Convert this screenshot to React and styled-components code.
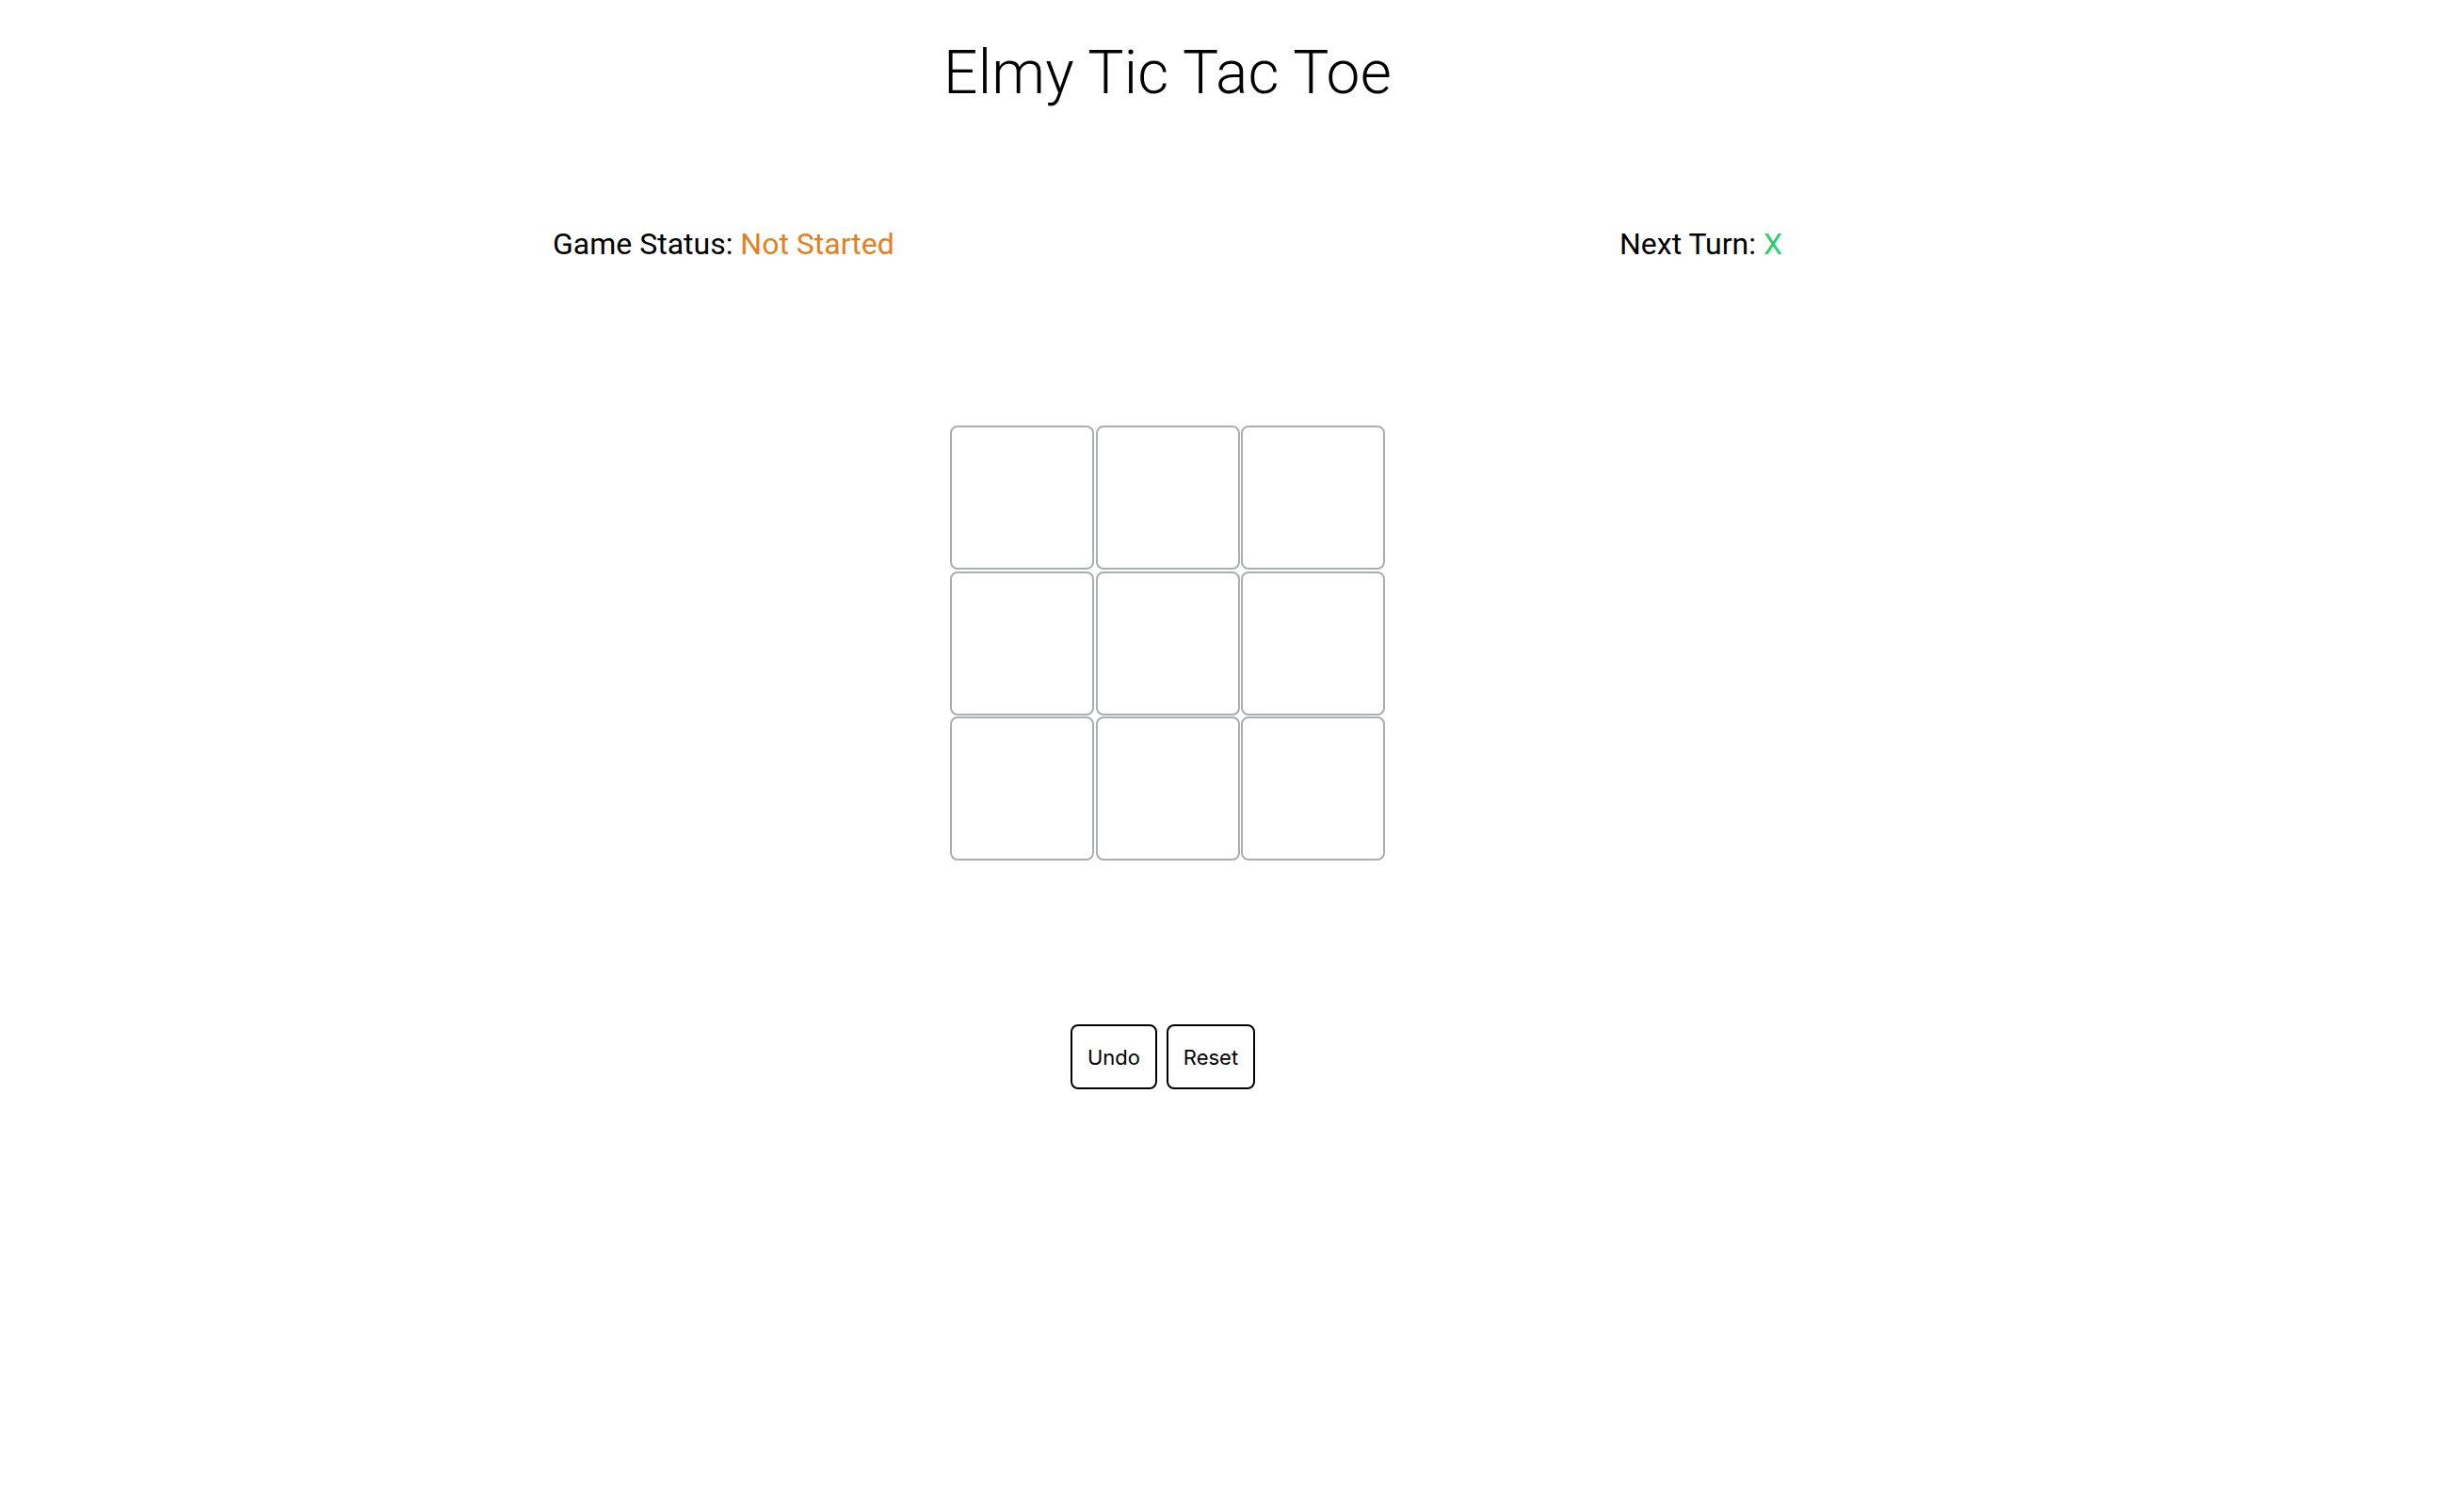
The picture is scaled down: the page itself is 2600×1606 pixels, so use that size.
import React, { useState } from 'react';
import styled, { createGlobalStyle } from 'styled-components';

const GlobalStyle = createGlobalStyle`
    html, body {
        margin: 0;
        padding: 0;
        background: #fff;
    }
    body {
        font-family: Roboto, 'Liberation Sans', sans-serif;
        color: #000;
    }
`;

const Page = styled.div`
    width: 2480px;
    display: flex;
    flex-direction: column;
    align-items: center;
`;

const Title = styled.h1`
    margin: 39px 0 0;
    font-size: 64px;
    line-height: 77px;
    font-weight: 300;
    letter-spacing: 0.2px;
`;

const StatusRow = styled.div`
    width: 1306px;
    margin-top: 123px;
    display: flex;
    justify-content: space-between;
    font-size: 32px;
    line-height: 40px;
`;

const Value = styled.span`
    color: ${props => props.color};
`;

const Board = styled.div`
    margin-top: 173px;
    display: grid;
    grid-template-columns: repeat(3, 153px);
    grid-auto-rows: 153px;
    gap: 1.5px;
`;

const Cell = styled.button`
    box-sizing: border-box;
    margin: 0;
    padding: 0;
    background: #fff;
    border: 2px solid #aaaeb2;
    border-radius: 8px;
    font-family: Roboto, sans-serif;
    font-size: 80px;
    cursor: pointer;
`;

const Actions = styled.div`
    margin: 174px 10px 0 0;
    display: flex;
    gap: 10px;
`;

const Button = styled.button`
    box-sizing: border-box;
    height: 69px;
    min-width: ${props => props.wide ? '94px' : '92px'};
    padding: 0 14px;
    background: #fff;
    border: 2px solid #000;
    border-radius: 8px;
    font-family: Inter, 'Noto Sans', sans-serif;
    font-size: 22px;
    color: #000;
    cursor: pointer;
`;

export default function App() {
    const [cells] = useState(Array(9).fill(null));
    return (
        <Page>
            <GlobalStyle />
            <Title>Elmy Tic Tac Toe</Title>
            <StatusRow>
                <div>
                    Game Status: <Value color="#e67e22">Not Started</Value>
                </div>
                <div>
                    Next Turn: <Value color="#2ecc71">X</Value>
                </div>
            </StatusRow>
            <Board>
                {cells.map((cell, i) => (
                    <Cell key={i}>{cell}</Cell>
                ))}
            </Board>
            <Actions>
                <Button>Undo</Button>
                <Button wide>Reset</Button>
            </Actions>
        </Page>
    );
}
